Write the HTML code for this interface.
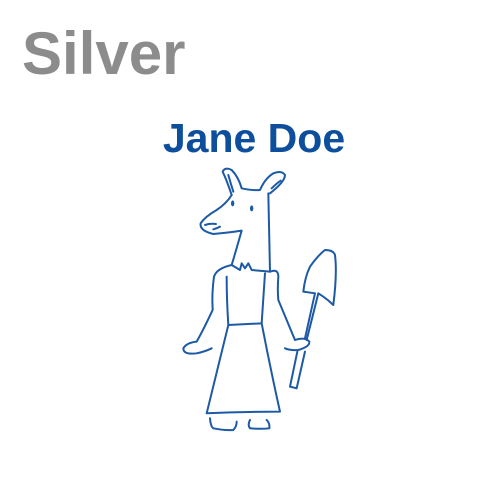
<!DOCTYPE html>
<html><head><style>
body{margin:0;width:500px;height:500px;background:#fff;position:relative;overflow:hidden;font-family:"Liberation Sans",sans-serif}
.s{position:absolute;left:22px;top:24px;font-size:60px;font-weight:bold;color:#8c8c8c;line-height:1}
.n{position:absolute;left:0;width:508px;text-align:center;top:118px;font-size:41px;font-weight:bold;color:#0d4f9c;line-height:1}
svg{position:absolute;left:0;top:0}
</style></head><body>
<div class="s">Silver</div>
<div class="n">Jane Doe</div>
<svg width="500" height="500"><g transform="translate(170,160) scale(0.3333)" fill="none" stroke="#1d5aa6" stroke-width="6" stroke-linejoin="round" stroke-linecap="round">
<path d="M185,105 Q170,60 158,35 Q165,20 185,30 Q205,50 215,85 Q245,92 270,90 Q285,55 310,40 Q335,30 345,45 Q345,65 300,100"/>
<path d="M175,45 Q182,70 190,95 M305,85 Q320,70 332,62"/>
<path d="M185,105 Q170,130 140,150 Q105,170 92,190 Q88,212 130,222 Q175,218 215,212 Q200,265 185,315"/>
<path d="M105,195 Q120,190 138,192 M130,208 Q142,205 150,200"/>
<ellipse cx="188" cy="130" rx="5" ry="9" fill="#1d5aa6" stroke="none"/>
<ellipse cx="245" cy="145" rx="5" ry="9" fill="#1d5aa6" stroke="none"/>
<path d="M295,100 Q298,220 300,335"/>
<path d="M185,315 L210,330 L215,310 L225,325 L235,310 L245,330 L300,335"/>
<path d="M185,315 Q140,325 132,350 Q125,400 128,450 Q100,510 80,545 Q50,548 40,565 Q40,585 80,580 Q105,575 125,565"/>
<path d="M300,335 Q325,325 325,350 Q322,390 325,420 Q350,480 375,540 Q405,530 418,545 Q420,560 385,570 Q360,572 345,565"/>
<path d="M170,350 Q170,420 175,495 L275,490 Q280,410 285,340"/>
<path d="M175,495 Q140,640 110,760 Q220,755 330,755 Q300,620 275,490"/>
<path d="M120,775 Q122,800 130,805 Q165,812 190,810 Q200,800 200,785 M240,780 Q232,795 240,805 Q275,808 298,805 Q300,790 290,780"/>
<path d="M405,535 L435,400 L400,395 Q405,350 420,320 Q445,285 465,270 Q490,270 495,285 Q502,340 490,435 Q475,420 460,410 L445,400 L410,540"/>
<path d="M382,575 L360,680 L380,685 L405,575"/>
</g></svg>
</body></html>
